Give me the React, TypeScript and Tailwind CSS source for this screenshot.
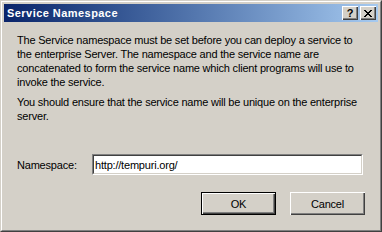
import React from "react";

const font = { fontFamily: "'Liberation Sans', Arial, sans-serif" };

function CapBtn({ children }: { children: React.ReactNode }) {
  return (
    <div className="w-[16px] h-[14px] bg-[#d4d0c8] flex items-center justify-center shadow-[inset_1px_1px_#ffffff,inset_-1px_-1px_#404040,inset_-2px_-2px_#808080]">
      {children}
    </div>
  );
}

export default function App() {
  return (
    <div
      className="w-[382px] h-[232px] box-border border border-t-[#d4d0c8] border-l-[#d4d0c8] border-b-[#404040] border-r-[#404040] bg-[#d4d0c8] overflow-hidden"
      style={font}
    >
      <div className="w-full h-full box-border border border-t-white border-l-white border-b-[#808080] border-r-[#808080] p-[2px] flex flex-col">
        <div className="h-[18px] shrink-0 bg-linear-to-r from-[#0a246a] to-[#a6caf0] flex items-center pl-[3px] pr-[2px]">
          <span className="text-white font-bold text-[11px] leading-none flex-1 tracking-[0.45px]">Service Namespace</span>
          <div className="flex gap-[2px]">
            <CapBtn>
              <span className="text-black font-bold text-[11px] leading-none mt-[1px]">?</span>
            </CapBtn>
            <CapBtn>
              <svg width="8" height="7" viewBox="0 0 8 7" shapeRendering="crispEdges">
                <path d="M0 0h2v1h-2zM6 0h2v1h-2zM1 1h2v1h-2zM5 1h2v1h-2zM2 2h4v1h-4zM3 3h2v1h-2zM2 4h4v1h-4zM1 5h2v1h-2zM5 5h2v1h-2zM0 6h2v1h-2zM6 6h2v1h-2z" fill="#000" />
              </svg>
            </CapBtn>
          </div>
        </div>
        <div className="flex-1 flex flex-col pl-[13px] pr-[12px] pt-[11px] text-[11px] leading-[14px] text-black whitespace-nowrap tracking-[-0.2px]">
          <p>
            The Service namespace must be set before you can deploy a service to<br />
            the enterprise Server. The namespace and the service name are<br />
            concatenated to form the service name which client programs will use to<br />
            invoke the service.
          </p>
          <p className="mt-[6px]">
            You should ensure that the service name will be unique on the enterprise<br />
            server.
          </p>
          <div className="flex items-center mt-[31px]">
            <span className="w-[75px]">Namespace:</span>
            <div className="w-[271px] h-[21px] box-border border border-t-[#808080] border-l-[#808080] border-b-white border-r-white">
              <div className="w-full h-full box-border border border-t-[#404040] border-l-[#404040] border-b-[#d4d0c8] border-r-[#d4d0c8] bg-white flex items-center pl-[1px]">
                http://tempuri.org/
              </div>
            </div>
          </div>
          <div className="flex justify-end gap-[14px] mt-[17px] pr-[1px]">
            <div className="w-[75px] h-[23px] box-border border border-black">
              <div className="w-full h-full bg-[#d4d0c8] flex items-center justify-center shadow-[inset_1px_1px_#ffffff,inset_-1px_-1px_#404040,inset_-2px_-2px_#808080]">
                OK
              </div>
            </div>
            <div className="w-[75px] h-[23px] bg-[#d4d0c8] flex items-center justify-center shadow-[inset_1px_1px_#ffffff,inset_-1px_-1px_#404040,inset_-2px_-2px_#808080]">
              Cancel
            </div>
          </div>
        </div>
      </div>
    </div>
  );
}
